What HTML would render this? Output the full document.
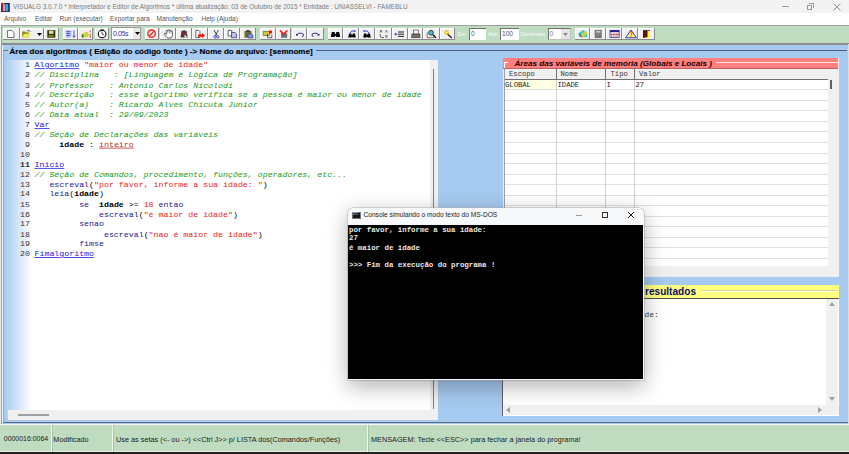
<!DOCTYPE html><html><head><meta charset="utf-8"><style>
*{box-sizing:border-box}
body{margin:0;width:849px;height:454px;overflow:hidden;position:relative;background:#f3f3f3;font-family:'Liberation Sans', sans-serif}
.ab{position:absolute}
.t{position:absolute;white-space:pre;line-height:1}
.btn{position:absolute;top:27.5px;height:12.5px;background:#f0f0f0;border-right:1px solid #8a8a8a;border-bottom:1px solid #8a8a8a;box-shadow:inset 1px 1px 0 #fff}
.code{position:absolute;left:34.5px;font-family:'Liberation Mono', monospace;font-size:8.28px;line-height:12.27px;white-space:pre;color:#000;transform:scaleY(0.81);transform-origin:0 0}
.kw{color:#2020e0;text-decoration:underline}
.cm{color:#1a9a1a;font-style:italic}
.st{color:#f02020}
.cmd{color:#1a1a90}
.ty{color:#c03030;text-decoration:underline}
.id{font-weight:bold}
</style></head><body><div style="position:absolute;left:0;top:0;width:849px;height:454px;overflow:hidden"><div class="ab" style="left:0;top:0;width:849px;height:13px;background:#f3f3f3"></div><svg class="ab" style="left:0;top:1px" width="11" height="11"><rect x="1" y="2.5" width="2.5" height="8" fill="#901850"/><circle cx="2.3" cy="3" r="1.3" fill="#c01030"/><rect x="3.3" y="3" width="1.5" height="7.5" fill="#c0a8b8"/><rect x="4.8" y="3" width="1.5" height="7.5" fill="#508028"/><rect x="6.3" y="3" width="1.5" height="7.5" fill="#20b0c0"/><rect x="7.8" y="2.5" width="2" height="8" fill="#1828c0"/><path d="M4 2.6H9.8" stroke="#101040" stroke-width="1"/><path d="M1 10.5H9.8" stroke="#201040" stroke-width="0.8"/></svg><div class="t" style="left:13px;top:3.5px;font-size:6.45px;color:#7a7a7a">VISUALG 3.0.7.0 * Interpretador e Editor de Algoritmos * última atualização: 03 de Outubro de 2015 * Entidade : UNIASSELVI - FAMEBLU</div><div class="ab" style="left:782px;top:6px;width:7px;height:1px;background:#999"></div><div class="ab" style="left:807px;top:4.5px;width:5px;height:5px;border:1px solid #999"></div><div class="ab" style="left:809px;top:2.5px;width:5px;height:5px;border-top:1px solid #999;border-right:1px solid #999"></div><svg class="ab" style="left:833px;top:3px" width="8" height="8"><path d="M0.5 0.5L7.5 7.5M7.5 0.5L0.5 7.5" stroke="#888" stroke-width="0.9"/></svg><div class="ab" style="left:0;top:13px;width:849px;height:12px;background:#fff"></div><div class="t" style="left:4px;top:15.5px;font-size:6.55px;color:#555">Arquivo</div><div class="t" style="left:35px;top:15.5px;font-size:6.55px;color:#555">Editar</div><div class="t" style="left:59.5px;top:15.5px;font-size:6.55px;color:#555">Run (executar)</div><div class="t" style="left:110px;top:15.5px;font-size:6.55px;color:#555">Exportar para</div><div class="t" style="left:156.5px;top:15.5px;font-size:6.55px;color:#555">Manutenção</div><div class="t" style="left:201.5px;top:15.5px;font-size:6.55px;color:#555">Help (Ajuda)</div><div class="ab" style="left:1px;top:25px;width:848px;height:20px;background:#c0dcc0;border-top:1px solid #a0a0a0;border-left:1px solid #a0a0a0;border-bottom:2px solid #8c8c8c"></div><div class="btn" style="left:3px;width:16.50px"></div><div class="btn" style="left:19.5px;width:24.00px"></div><div class="btn" style="left:43.5px;width:15.30px"></div><div class="btn" style="left:63px;width:15.00px"></div><div class="btn" style="left:78px;width:15.00px"></div><div class="btn" style="left:94.8px;width:14.70px"></div><div class="btn" style="left:144.7px;width:14.80px"></div><div class="btn" style="left:159.5px;width:16.00px"></div><div class="btn" style="left:175.5px;width:16.00px"></div><div class="btn" style="left:191.5px;width:16.00px"></div><div class="btn" style="left:207.5px;width:16.80px"></div><div class="btn" style="left:224.3px;width:16.00px"></div><div class="btn" style="left:240.3px;width:15.70px"></div><div class="btn" style="left:260px;width:15.60px"></div><div class="btn" style="left:275.6px;width:15.90px"></div><div class="btn" style="left:291.5px;width:15.90px"></div><div class="btn" style="left:307.4px;width:16.60px"></div><div class="btn" style="left:327.7px;width:15.60px"></div><div class="btn" style="left:343.3px;width:15.80px"></div><div class="btn" style="left:359.1px;width:15.90px"></div><div class="btn" style="left:375px;width:16.50px"></div><div class="btn" style="left:391.5px;width:16.00px"></div><div class="btn" style="left:407.5px;width:15.80px"></div><div class="btn" style="left:423.3px;width:16.40px"></div><div class="btn" style="left:439.7px;width:15.70px"></div><div class="btn" style="left:574.7px;width:15.60px"></div><div class="btn" style="left:590.3px;width:16.00px"></div><div class="btn" style="left:606.3px;width:15.70px"></div><div class="btn" style="left:622px;width:16.00px"></div><div class="btn" style="left:638px;width:16.80px"></div><svg class="ab" style="left:37px;top:33px" width="5" height="3"><path d="M0 0H5L2.5 3Z" fill="#000"/></svg><svg class="ab" style="left:0;top:0;overflow:visible" width="849" height="45">
<path d="M7.5 30.5H11.8L14 32.7V37.5H7.5Z" fill="#fff" stroke="#6a6a6a" stroke-width="0.9"/>
<path d="M22.2 31.5H25L26 32.5H29V37.3H22.2Z" fill="#8a8a10"/><path d="M22.2 37.3L24 33.8H31L29 37.3Z" fill="#e8e860"/><path d="M27 31.2Q29 29.5 30.5 31.5" stroke="#404040" stroke-width="0.8" fill="none"/>
<rect x="47.3" y="30.2" width="8" height="7.5" fill="#303000"/><rect x="49" y="30.8" width="4.5" height="3" fill="#e0e0a0"/><rect x="48.5" y="35" width="5" height="2.2" fill="#808020"/>
<rect x="65.5" y="30.5" width="6" height="7" fill="#c8d0f0"/><path d="M66 31.5H71M66 33.5H71M66 35.5H71M68 30.5V37.5" stroke="#4050d0" stroke-width="0.7"/><path d="M74 30.5V37M72.8 35.8L74 37.5L75.2 35.8" stroke="#2030b0" stroke-width="0.8" fill="none"/>
<path d="M81.8 33.5H84L85 32H87.5L89 35L87.5 37.5H81.8Z" fill="#d0d040"/><rect x="81.8" y="34.5" width="1.6" height="3" fill="#207020"/><path d="M90.2 30.5V38" stroke="#c04040" stroke-width="0.9"/><path d="M90.2 32V34" stroke="#fff" stroke-width="0.9"/>
<circle cx="102.1" cy="34" r="3.8" fill="#fff" stroke="#111" stroke-width="1.1"/><path d="M102.1 31.5V34L104 35" stroke="#111" stroke-width="0.8" fill="none"/><path d="M100.5 29.8H103.7" stroke="#111" stroke-width="0.8"/>
<circle cx="151.6" cy="33.7" r="3.7" fill="none" stroke="#f02020" stroke-width="1.3"/><path d="M149 36.3L154.2 31.1" stroke="#f02020" stroke-width="1.3"/>
<path d="M166.3 34.2V31.2Q166.3 30.4 167.1 30.4Q167.8 30.4 167.8 31.2V30.6Q167.8 29.8 168.6 29.8Q169.4 29.8 169.4 30.6V30.9Q169.4 30.2 170.2 30.2Q171 30.2 171 31V31.6Q171 31 171.7 31Q172.4 31 172.4 31.7V35.5Q172.4 38 170 38H168.2Q167 38 166 36.5L164.2 34.2Q164 33.5 164.8 33.4Z" fill="#fff" stroke="#303030" stroke-width="0.75"/><path d="M167.8 31.2V33.5M169.4 30.8V33.5M171 31.4V33.5" stroke="#707070" stroke-width="0.6"/>
<path d="M180.5 37.5L181.5 31.5L184 30L186.5 31.5L187.8 37.5Z" fill="#404040"/><path d="M181 31.5L187 37M187 31.5L181 37" stroke="#a01020" stroke-width="1"/><path d="M184.5 34.5L187.8 37.5H184.5Z" fill="#f0f0f0"/>
<path d="M195.8 30.5H199L200 31.5V37.5H195.8Z" fill="#f4f4f4" stroke="#505050" stroke-width="0.8"/><path d="M198 34.5H202V33L205 35.5L202 38V36.7H198Z" fill="#f01010"/>
<path d="M214 30L217 35.5M218.5 30L215.5 35.5" stroke="#303030" stroke-width="0.9"/><circle cx="215" cy="36.8" r="1.2" fill="none" stroke="#3040c0" stroke-width="0.9"/><circle cx="217.8" cy="36.8" r="1.2" fill="none" stroke="#3040c0" stroke-width="0.9"/>
<path d="M228.2 30.5H231.8V36H228.2Z" fill="#fff" stroke="#404040" stroke-width="0.8"/><path d="M231.5 32.5H235L236.6 34V37.7H231.5Z" fill="#c0c0f0" stroke="#404080" stroke-width="0.8"/>
<rect x="244.5" y="31" width="7" height="6.7" fill="#6a7030"/><rect x="246.3" y="30.2" width="3.4" height="1.6" fill="#303030"/><path d="M248 34H251.5L253 35.3V38H248Z" fill="#8090e0" stroke="#303080" stroke-width="0.6"/>
<path d="M263.2 31.5H269.5V35.5H263.2Z" fill="#d0c840" stroke="#505010" stroke-width="0.6"/><circle cx="270.5" cy="32" r="1.7" fill="#f01010"/><path d="M267.5 34V37.7H271.8V34.5" fill="none" stroke="#404040" stroke-width="0.8"/>
<rect x="281" y="33.2" width="6.2" height="4.5" fill="#707070"/><path d="M280 30.5L283.5 34L287.5 30.5" stroke="#f01010" stroke-width="1.6" fill="none"/>
<path d="M297 34.5L298.5 33.3H301.5Q303.5 33.3 303.5 35Q303.5 36.5 302 36.5" stroke="#202090" stroke-width="0.9" fill="none"/><rect x="296" y="34" width="1.8" height="1.6" fill="#202090"/>
<path d="M318.5 34.5L317 33.3H314Q312 33.3 312 35Q312 36.5 313.5 36.5" stroke="#202090" stroke-width="0.9" fill="none"/><rect x="317.7" y="34" width="1.8" height="1.6" fill="#202090"/>
<path d="M330.8 37L331.8 32H334.6L335.2 34H335.8L336.4 32H339.2L340.2 37H336.3L335.5 35.5L334.7 37Z" fill="#000"/>
<path d="M348.2 37.5L349 33.5H351.2L351.7 35H352.3L352.8 33.5H355L355.8 37.5H352.6L352 36.5L351.4 37.5Z" fill="#000"/><path d="M350 33Q351.5 30 355 31" stroke="#2030c0" stroke-width="0.9" fill="none"/><path d="M354.5 30L356 31L354.5 32.3" fill="#2030c0"/>
<path d="M363.2 37.5L364 33.5H366.2L366.7 35H367.3L367.8 33.5H370L370.8 37.5H367.6L367 36.5L366.4 37.5Z" fill="#000"/><path d="M369 33Q368 30 364 31" stroke="#2030c0" stroke-width="0.9" fill="none"/><path d="M364.5 30L363 31L364.5 32.3" fill="#2030c0"/>
<path d="M380 32.5L381 30.2L382 32.5M380.3 34V36Q380.3 37.5 382 37.5H384" stroke="#303030" stroke-width="0.7" fill="none"/><path d="M385.5 32.5L386.5 30.2L387.5 32.5" stroke="#505050" stroke-width="0.6" fill="none"/><rect x="385" y="35" width="2.8" height="2.8" fill="#a0a0a0"/>
<path d="M398 32H404M398 34.2H404M398 36.4H404" stroke="#202020" stroke-width="1"/><path d="M394.8 34.2H397.5M396 32.8L394.8 34.2L396 35.6" stroke="#2030d0" stroke-width="0.9" fill="none"/>
<rect x="413.5" y="30" width="5" height="4.5" fill="#f0f0f0" stroke="#404040" stroke-width="0.6"/><path d="M411.3 35Q411.3 33.6 412.8 33.6H419Q420.4 33.6 420.4 35V37.9H411.3Z" fill="#505050"/><path d="M412 36H419.8" stroke="#b0b080" stroke-width="0.8"/>
<path d="M427.2 32.5V37.7H434V35" fill="#f0f0f0" stroke="#404040" stroke-width="0.7"/><circle cx="431" cy="32.8" r="2.4" fill="#40c0d0" stroke="#202020" stroke-width="0.8"/><path d="M432.8 34.6L436 37.7" stroke="#000" stroke-width="1.2"/>
<path d="M447 33.5L451.8 38" stroke="#202020" stroke-width="1.3"/><path d="M445.5 30L448.5 30.8L449 33.5L446.5 35L443.8 33.2Z" fill="#f0c020"/><circle cx="446.5" cy="32.5" r="1" fill="#ffff80"/>
<path d="M579 33L583 30L587 32V37H579Z" fill="#40c0d0"/><path d="M580 36L585 30.5L587.5 33.5L583 37.5Z" fill="#d0d040"/><path d="M578.8 33.5L582 37.5" stroke="#203060" stroke-width="0.8"/>
<rect x="595" y="30.2" width="6.3" height="7.6" fill="#808080" stroke="#505050" stroke-width="0.5"/><rect x="596" y="31" width="4.3" height="1.6" fill="#c0d0c0"/><rect x="599" y="35.5" width="1.5" height="1.8" fill="#c04040"/>
<rect x="610" y="30.5" width="9.2" height="7" fill="#f4e8e8" stroke="#302080" stroke-width="0.7"/><rect x="610" y="30.3" width="9.2" height="1.8" fill="#202090"/><path d="M611.5 33V37M613.8 33V37M616.1 33V37M618 33V37M610.5 34.5H619" stroke="#c04060" stroke-width="0.6"/>
<path d="M631 30L636.5 37.8H625.5Z" fill="#fff070" stroke="#2030c0" stroke-width="0.9"/><path d="M629.6 32.3Q631 30.8 632.4 32.3Q632.4 33.5 631 34.3V35.3" stroke="#f02010" stroke-width="1" fill="none"/><circle cx="631" cy="36.6" r="0.6" fill="#f02010"/>
<rect x="643" y="30.5" width="7" height="7.5" fill="#ffff20"/><path d="M643 30.5H647.5V37L643 38Z" fill="#601010"/><path d="M643 30.5H650" stroke="#303030" stroke-width="0.8"/>
</svg><div class="ab" style="left:111px;top:27px;width:30px;height:13px;background:#fff;border:1px solid #9a9a9a"></div><div class="t" style="left:113px;top:30px;font-size:7px;letter-spacing:-0.4px;color:#3030a0">0.05s</div><div class="ab" style="left:133px;top:28px;width:7px;height:11px;background:#e8e8e8"></div><svg class="ab" style="left:134.5px;top:32px" width="5" height="3"><path d="M0 0H5L2.5 3Z" fill="#000"/></svg><div class="t" style="left:457.5px;top:31px;font-size:6px;color:#f8fbf8">De:</div><div class="ab" style="left:469px;top:28px;width:17px;height:12px;background:#fff;border-top:1px solid #707070;border-left:1px solid #707070"></div><div class="t" style="left:471px;top:30.5px;font-size:6.6px;color:#555">0</div><div class="t" style="left:488px;top:31px;font-size:6px;color:#f8fbf8">Até:</div><div class="ab" style="left:500px;top:28px;width:19px;height:12px;background:#fff;border-top:1px solid #707070;border-left:1px solid #707070"></div><div class="t" style="left:502px;top:30.5px;font-size:6.6px;color:#555">100</div><div class="t" style="left:520.5px;top:31px;font-size:6px;color:#f8fbf8">Decimais</div><div class="ab" style="left:547.5px;top:28px;width:23px;height:12px;background:#fff;border-top:1px solid #707070;border-left:1px solid #707070;border-right:1px solid #c0c0c0;border-bottom:1px solid #c0c0c0"></div><div class="t" style="left:549.5px;top:30.5px;font-size:6.6px;color:#777">0</div><div class="ab" style="left:561px;top:29px;width:9px;height:10px;background:#e4e4e4"></div><svg class="ab" style="left:563px;top:33px" width="5" height="3"><path d="M0 0H5L2.5 3Z" fill="#888"/></svg><div class="ab" style="left:0;top:45px;width:849px;height:379px;background:#a6caf0"></div><div class="ab" style="left:0;top:44px;width:1px;height:380px;background:#e8e8e8"></div><div class="ab" style="left:1px;top:44px;width:1px;height:380px;background:#a0a0a0"></div><div class="ab" style="left:2px;top:45px;width:1px;height:378px;background:#f4f8fc"></div><div class="ab" style="left:3px;top:50px;width:845px;height:1px;background:#50607a"></div><div class="ab" style="left:847px;top:50px;width:1px;height:372px;background:#b0c8e4"></div><div class="ab" style="left:848px;top:44px;width:1px;height:380px;background:#dcdcdc"></div><div class="ab" style="left:3px;top:50px;width:1px;height:372px;background:#90a8c8"></div><div class="ab" style="left:3px;top:421.5px;width:845px;height:1px;background:#606a78"></div><div class="ab" style="left:8px;top:46px;width:307.5px;height:9px;background:#a6caf0"></div><div class="ab" style="left:3px;top:50px;width:4.5px;height:1px;background:#6a7a98"></div><div class="t" style="left:9.5px;top:47.5px;font-size:8.03px;font-weight:bold;color:#000;-webkit-text-stroke:0.15px #000">Área dos algoritmos ( Edição do código fonte ) -&gt; Nome do arquivo: [semnome]</div><div class="ab" style="left:4px;top:59.5px;width:434px;height:360px;background:#fff"></div><div class="ab" style="left:4px;top:59.5px;width:28px;height:360px;background:linear-gradient(90deg,#a6caf0,#ffffff)"></div><div class="ab" style="left:429.5px;top:59.5px;width:8.5px;height:350px;background:#f0f0f0"></div><div class="ab" style="left:433px;top:69px;width:1px;height:340px;background:#808080"></div><div class="ab" style="left:8px;top:409.5px;width:430px;height:10px;background:#f0f0f0"></div><div class="ab" style="left:17.5px;top:414px;width:31px;height:2px;background:#a0a0a0"></div><div class="code" style="left:14px;width:16px;text-align:right;top:60.9px;color:#333">1
2
3
4
5
6
7
8
9
10
<b>11</b>
12
13
14
15
16
17
18
19
20</div><div class="code" style="top:60.9px"><span class="kw">Algoritmo</span> <span class="st">"maior ou menor de idade"</span>
<span class="cm">// Disciplina   : [Linguagem e Lógica de Programação]</span>
<span class="cm">// Professor   : Antonio Carlos Nicolodi</span>
<span class="cm">// Descrição   : esse algoritmo verifica se a pessoa é maior ou menor de idade</span>
<span class="cm">// Autor(a)    : Ricardo Alves Chicuta Junior</span>
<span class="cm">// Data atual  : 29/09/2023</span>
<span class="kw">Var</span>
<span class="cm">// Seção de Declarações das variáveis</span>
     <span class="id">idade</span> : <span class="ty">inteiro</span>

<span class="kw">Inicio</span>
<span class="cm">// Seção de Comandos, procedimento, funções, operadores, etc...</span>
   <span class="cmd">escreval</span>(<span class="st">"por favor, informe a sua idade: "</span>)
   <span class="cmd">leia</span>(<span class="id">idade</span>)
         <span class="cmd">se</span>  <span class="id">idade</span> &gt;= <span class="st">18</span> <span class="cmd">entao</span>
             <span class="cmd">escreval</span>(<span class="st">"é maior de idade"</span>)
         <span class="cmd">senao</span>
              <span class="cmd">escreval</span>(<span class="st">"nao é maior de idade"</span>)
         <span class="cmd">fimse</span>
<span class="kw">Fimalgoritmo</span></div><div class="ab" style="left:503px;top:58px;width:335.5px;height:218.5px;background:#f0f0f0"></div><div class="ab" style="left:503px;top:58px;width:335px;height:10.5px;background:#ff8080;border-bottom:1px solid #c06060"></div><div class="ab" style="left:504px;top:62px;width:4px;height:1px;background:#fff"></div><div class="ab" style="left:504px;top:62px;width:1px;height:6px;background:#fff"></div><div class="t" style="left:514.5px;top:59.5px;font-size:8.1px;font-weight:bold;font-style:italic;color:#200000">Áreas das variáveis de memória (Globais e Locais )</div><div class="ab" style="left:716px;top:62px;width:122px;height:1px;background:#ffe0e0"></div><div class="ab" style="left:504px;top:68.5px;width:323.5px;height:197.5px;background:#fff;border-left:1px solid #a0a0a0"></div><div class="ab" style="left:505px;top:68.5px;width:322.5px;height:11px;background:#f0f0f0;border-bottom:1.5px solid #707070"></div><div class="ab" style="left:555.75px;top:68.5px;width:1.5px;height:11px;background:#707070"></div><div class="ab" style="left:604.75px;top:68.5px;width:1.5px;height:11px;background:#707070"></div><div class="ab" style="left:633.55px;top:68.5px;width:1.5px;height:11px;background:#707070"></div><div class="t" style="left:509px;top:71px;font-family:'Liberation Mono', monospace;font-size:7.2px;color:#333">Escopo</div><div class="t" style="left:560.5px;top:71px;font-family:'Liberation Mono', monospace;font-size:7.2px;color:#333">Nome</div><div class="t" style="left:610.5px;top:71px;font-family:'Liberation Mono', monospace;font-size:7.2px;color:#333">Tipo</div><div class="t" style="left:639px;top:71px;font-family:'Liberation Mono', monospace;font-size:7.2px;color:#333">Valor</div><div class="ab" style="left:505px;top:89.20px;width:322.5px;height:1px;background:#e0e0e0"></div><div class="ab" style="left:505px;top:99.75px;width:322.5px;height:1px;background:#e0e0e0"></div><div class="ab" style="left:505px;top:110.30px;width:322.5px;height:1px;background:#e0e0e0"></div><div class="ab" style="left:505px;top:120.85px;width:322.5px;height:1px;background:#e0e0e0"></div><div class="ab" style="left:505px;top:131.40px;width:322.5px;height:1px;background:#e0e0e0"></div><div class="ab" style="left:505px;top:141.95px;width:322.5px;height:1px;background:#e0e0e0"></div><div class="ab" style="left:505px;top:152.50px;width:322.5px;height:1px;background:#e0e0e0"></div><div class="ab" style="left:505px;top:163.05px;width:322.5px;height:1px;background:#e0e0e0"></div><div class="ab" style="left:505px;top:173.60px;width:322.5px;height:1px;background:#e0e0e0"></div><div class="ab" style="left:505px;top:184.15px;width:322.5px;height:1px;background:#e0e0e0"></div><div class="ab" style="left:505px;top:194.70px;width:322.5px;height:1px;background:#e0e0e0"></div><div class="ab" style="left:505px;top:205.25px;width:322.5px;height:1px;background:#e0e0e0"></div><div class="ab" style="left:505px;top:215.80px;width:322.5px;height:1px;background:#e0e0e0"></div><div class="ab" style="left:505px;top:226.35px;width:322.5px;height:1px;background:#e0e0e0"></div><div class="ab" style="left:505px;top:236.90px;width:322.5px;height:1px;background:#e0e0e0"></div><div class="ab" style="left:505px;top:247.45px;width:322.5px;height:1px;background:#e0e0e0"></div><div class="ab" style="left:505px;top:258.00px;width:322.5px;height:1px;background:#e0e0e0"></div><div class="ab" style="left:556.0px;top:79.5px;width:1px;height:186px;background:#d0d0d0"></div><div class="ab" style="left:605.0px;top:79.5px;width:1px;height:186px;background:#d0d0d0"></div><div class="ab" style="left:633.8px;top:79.5px;width:1px;height:186px;background:#d0d0d0"></div><div class="ab" style="left:505px;top:80px;width:51px;height:9px;background:#ffffe1"></div><div class="t" style="left:505px;top:81.5px;font-family:'Liberation Mono', monospace;font-size:7.2px;color:#222">GLOBAL</div><div class="t" style="left:557.5px;top:81.5px;font-family:'Liberation Mono', monospace;font-size:7.2px;color:#222">IDADE</div><div class="t" style="left:606.5px;top:81.5px;font-family:'Liberation Mono', monospace;font-size:7.2px;color:#222">I</div><div class="t" style="left:635.5px;top:81.5px;font-family:'Liberation Mono', monospace;font-size:7.2px;color:#222">27</div><div class="ab" style="left:830px;top:80px;width:1.5px;height:9px;background:#606060"></div><div class="ab" style="left:501.5px;top:276px;width:337px;height:1px;background:#e8eef8"></div><div class="ab" style="left:502px;top:285px;width:336.5px;height:14px;background:#ffff80;border-bottom:1px solid #505050"></div><div class="t" style="left:599px;top:286.5px;font-size:10.1px;font-weight:bold;color:#101068">Área dos resultados</div><div class="ab" style="left:702px;top:289.5px;width:136px;height:1px;background:#d8d890"></div><div class="ab" style="left:702px;top:290.5px;width:136px;height:1px;background:#ffffe8"></div><div class="ab" style="left:502px;top:299px;width:336.5px;height:117px;background:#fff;border-left:1px solid #606060"></div><div class="ab" style="left:826px;top:299px;width:12px;height:106px;background:#f0f0f0"></div><svg class="ab" style="left:828.5px;top:302px" width="6" height="4"><path d="M0 4H6L3 0Z" fill="#a0a0a0"/></svg><svg class="ab" style="left:828.5px;top:397px" width="6" height="4"><path d="M0 0H6L3 4Z" fill="#a0a0a0"/></svg><div class="ab" style="left:503px;top:405px;width:335.5px;height:10px;background:#f0f0f0"></div><svg class="ab" style="left:506px;top:407px" width="4" height="6"><path d="M4 0V6L0 3Z" fill="#a0a0a0"/></svg><svg class="ab" style="left:818px;top:407px" width="4" height="6"><path d="M0 0V6L4 3Z" fill="#a0a0a0"/></svg><div class="t" style="left:505.3px;top:311.7px;font-family:'Liberation Mono', monospace;font-size:8.28px;color:#444;transform:scaleY(0.81);transform-origin:0 0">por favor, informe a sua idade:</div><div class="ab" style="left:0;top:423.5px;width:849px;height:30.5px;background:#c0dcc0;border-top:1px solid #f4f4f4"></div><div class="ab" style="left:0;top:451px;width:849px;height:1px;background:#e8f0e8"></div><div class="ab" style="left:0;top:452px;width:849px;height:2px;background:#202020"></div><div class="ab" style="left:51px;top:425px;width:1px;height:27px;background:#f0f8f0"></div><div class="ab" style="left:52px;top:425px;width:1px;height:27px;background:#a8c4a8"></div><div class="ab" style="left:112px;top:425px;width:1px;height:27px;background:#f0f8f0"></div><div class="ab" style="left:113px;top:425px;width:1px;height:27px;background:#a8c4a8"></div><div class="ab" style="left:367px;top:425px;width:1px;height:27px;background:#f0f8f0"></div><div class="ab" style="left:368px;top:425px;width:1px;height:27px;background:#a8c4a8"></div><div class="t" style="left:3.8px;top:436.3px;font-size:6.95px;color:#1a1a1a">0000016:0064</div><div class="t" style="left:53.3px;top:436px;font-size:7.3px;color:#1a1a1a">Modificado</div><div class="t" style="left:116px;top:436px;font-size:7.3px;color:#1a1a1a">Use as setas (&lt;- ou -&gt;) &lt;&lt;Ctrl J&gt;&gt; p/ LISTA dos(Comandos/Funções)</div><div class="t" style="left:371px;top:436px;font-size:7.3px;color:#1a1a1a">MENSAGEM: Tecle &lt;&lt;ESC&gt;&gt; para fechar a janela do programa!</div><div class="ab" style="left:347.5px;top:207.5px;width:296.5px;height:172px;border-radius:5px 5px 0 0;background:#f6f8fa;box-shadow:0 6px 22px rgba(0,0,0,0.32),0 0 0 0.5px #c0c0c0"></div><div class="ab" style="left:352px;top:211.5px;width:8.5px;height:7px;background:#1a1a1a;border:0.5px solid #777"></div><div class="t" style="left:353px;top:213px;font-size:3.5px;color:#fff">C:\</div><div class="t" style="left:363.5px;top:212px;font-size:6.62px;color:#1a1a1a">Console simulando o modo texto do MS-DOS</div><div class="ab" style="left:576px;top:214.5px;width:6px;height:1px;background:#999"></div><div class="ab" style="left:601.5px;top:211.5px;width:6.5px;height:6.5px;border:1px solid #333"></div><svg class="ab" style="left:627px;top:211px" width="8" height="8"><path d="M1 1L7 7M7 1L1 7" stroke="#222" stroke-width="1"/></svg><div class="ab" style="left:348px;top:224.5px;width:295px;height:154.5px;background:#000"></div><div class="t" style="left:349px;top:225.65px;font-family:'Liberation Mono', monospace;font-weight:bold;font-size:7.4px;line-height:10.29px;color:#e8e8e8;transform:scaleY(0.85);transform-origin:0 0">por favor, informe a sua idade:
27
é maior de idade

&gt;&gt;&gt; Fim da execução do programa !</div></div></body></html>
